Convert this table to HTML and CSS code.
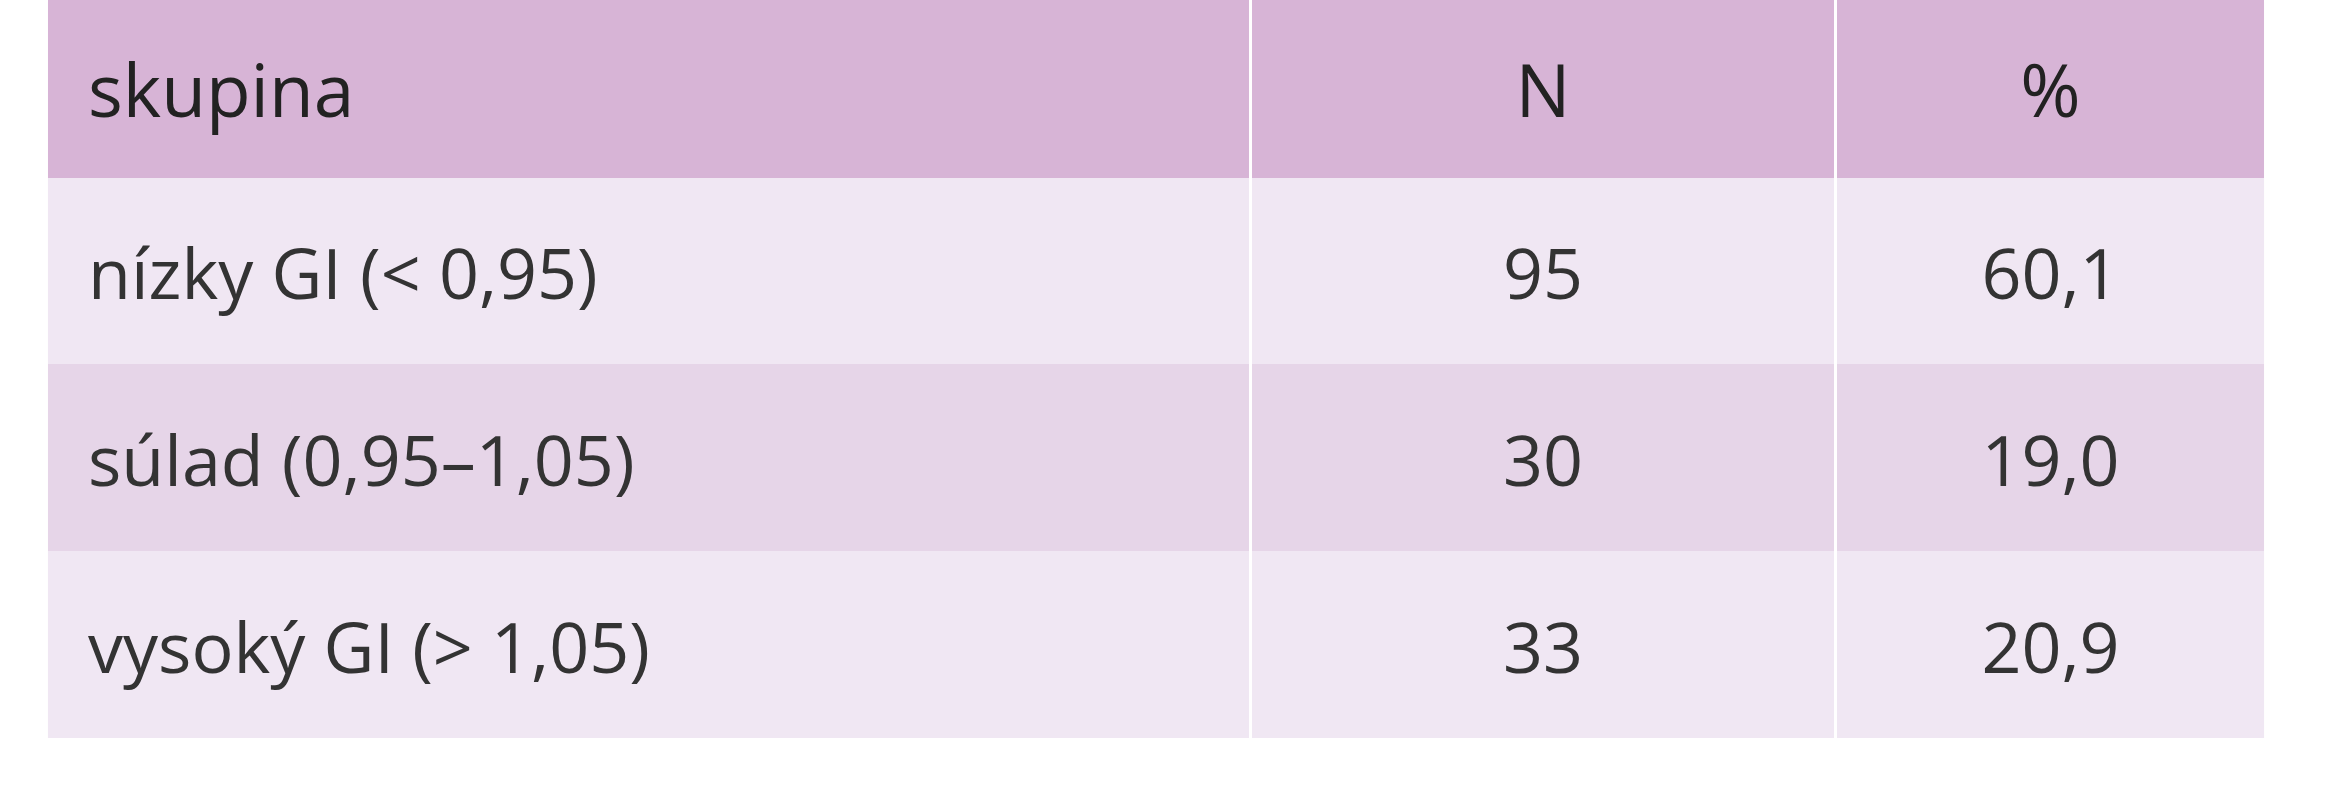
FILE: index.html
```html
<!DOCTYPE html>
<html lang="sk">
<head>
<meta charset="utf-8">
<title>Tabuľka</title>
<link rel="stylesheet" href="styles.css">
</head>
<body>
<table class="data-table">
  <colgroup>
    <col class="col-group">
    <col class="col-n">
    <col class="col-pct">
  </colgroup>
  <thead>
    <tr class="head-row">
      <th class="cell cell-label">skupina</th>
      <th class="cell cell-num">N</th>
      <th class="cell cell-num">%</th>
    </tr>
  </thead>
  <tbody>
    <tr class="row row-odd row-first">
      <td class="cell cell-label">nízky GI (&lt; 0,95)</td>
      <td class="cell cell-num">95</td>
      <td class="cell cell-num">60,1</td>
    </tr>
    <tr class="row row-even">
      <td class="cell cell-label">súlad (0,95–1,05)</td>
      <td class="cell cell-num">30</td>
      <td class="cell cell-num">19,0</td>
    </tr>
    <tr class="row row-odd">
      <td class="cell cell-label">vysoký GI (&gt; 1,05)</td>
      <td class="cell cell-num">33</td>
      <td class="cell cell-num">20,9</td>
    </tr>
  </tbody>
</table>
</body>
</html>
```

FILE: styles.css
```css
html, body {
  margin: 0;
  padding: 0;
  background: #ffffff;
}

body {
  font-family: "Open Sans", "Noto Sans", "Liberation Sans", sans-serif;
  color: #333333;
}

.data-table {
  margin-left: 48px;
  width: 2216px;
  table-layout: fixed;
  border-collapse: separate;
  border-spacing: 0;
  box-shadow: 0 2px 2px rgba(0, 0, 0, 0.025);
}

.col-group { width: 1201px; }
.col-n { width: 585px; }
.col-pct { width: 430px; }

.cell {
  font-size: 70px;
  font-weight: 400;
  line-height: normal;
  padding: 0 0 0 40px;
  vertical-align: middle;
  white-space: nowrap;
}

.cell + .cell {
  border-left: 3px solid #ffffff;
  padding: 0;
}

.cell-label { text-align: left; }
.cell-num { text-align: center; }

.head-row {
  height: 178px;
  background: #d7b4d6;
}

.head-row .cell {
  font-size: 73px;
  color: #222222;
  padding-bottom: 2px;
}

.row { height: 187px; }
.row-first { height: 186px; }

.row .cell { padding-top: 2px; }
.row .cell + .cell { padding-top: 2px; }

.row-odd { background: #f0e7f3; }
.row-even { background: #e6d5e8; }
```
